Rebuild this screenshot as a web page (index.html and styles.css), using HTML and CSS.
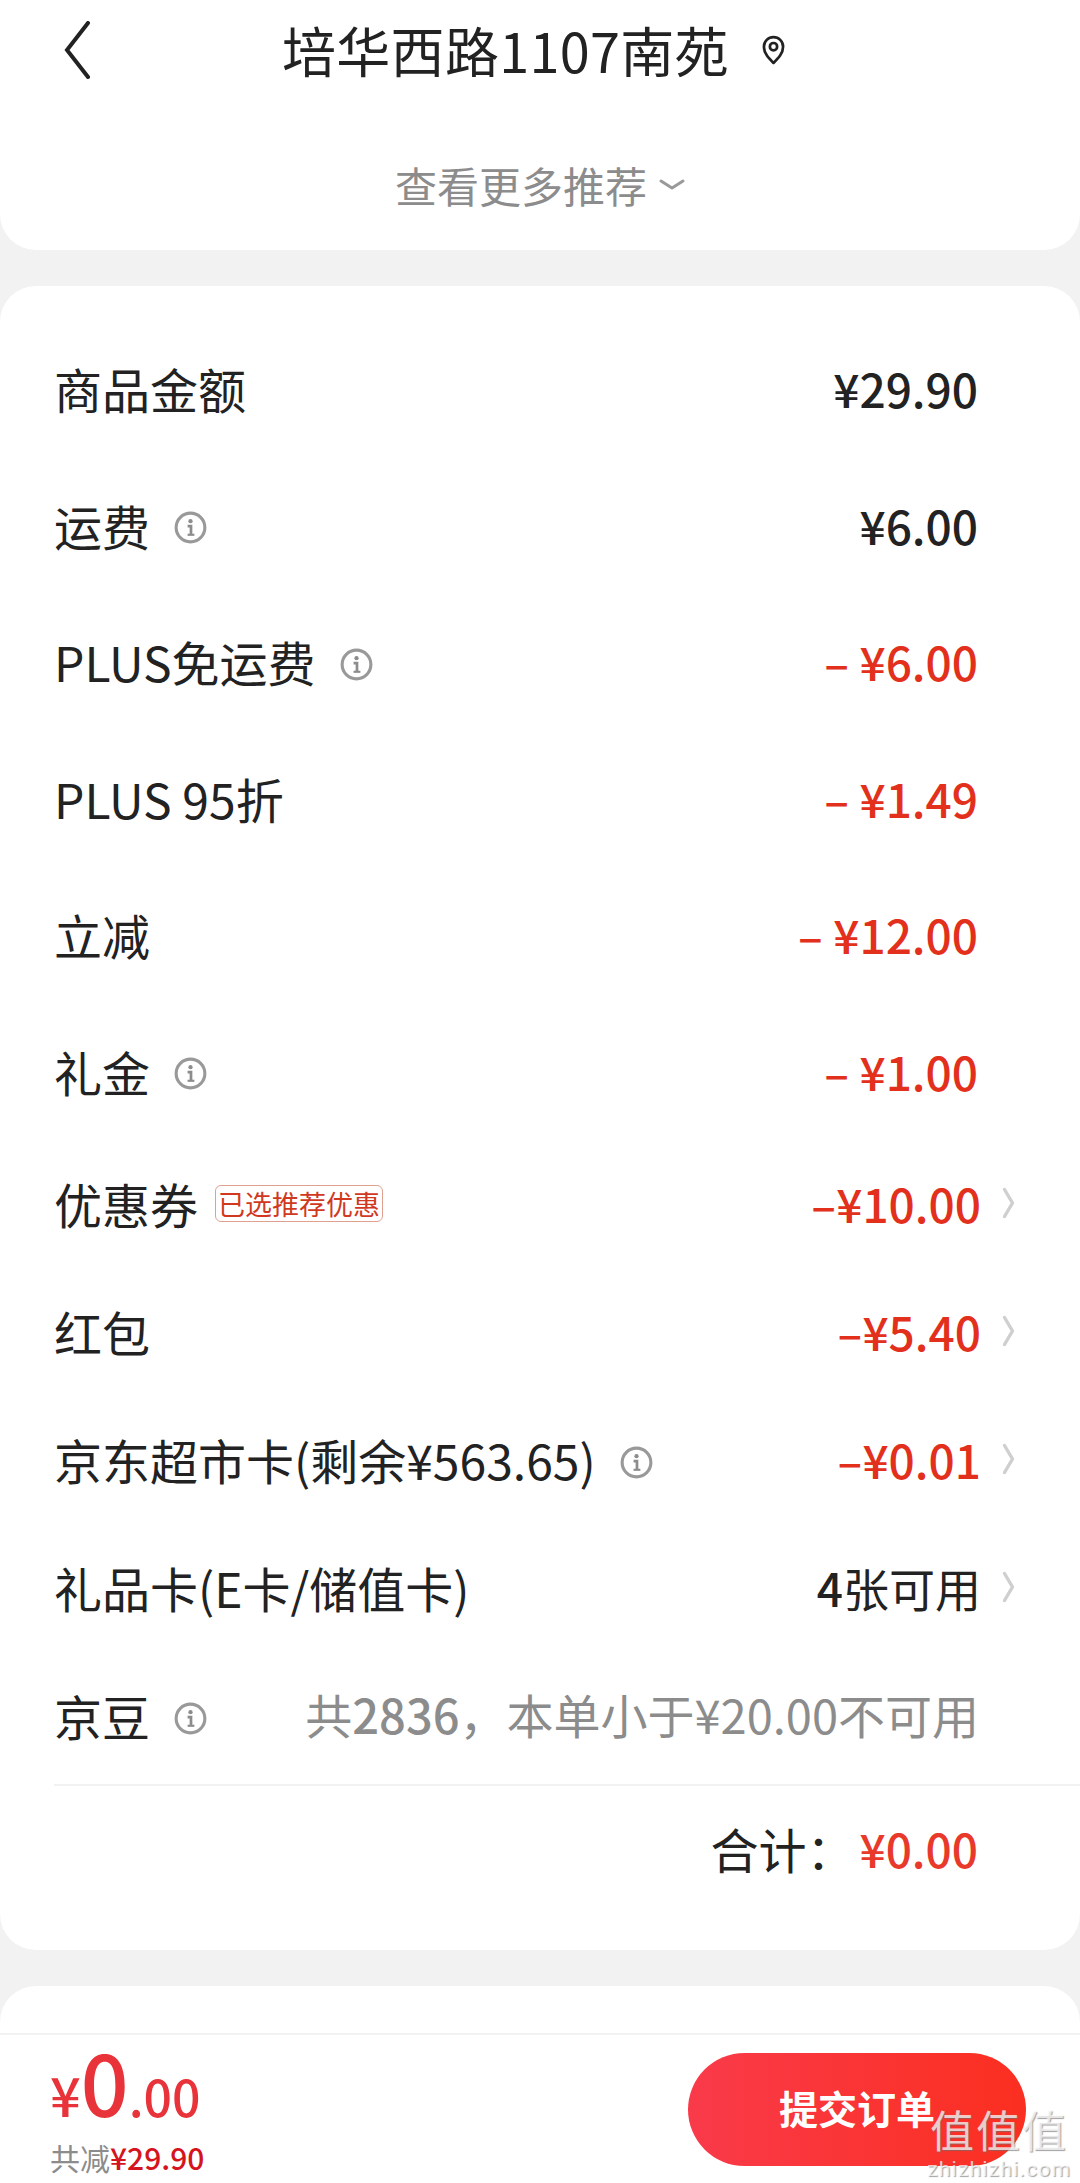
FILE: index.html
```html
<!DOCTYPE html>
<html lang="zh-CN">
<head>
    <meta charset="UTF-8">
    <meta name="viewport" content="width=device-width, initial-scale=1.0">
    <title>提交订单</title>
    <link rel="stylesheet" href="styles.css">
</head>
<body>

<svg class="icon-defs" width="0" height="0">
    <symbol id="info" viewBox="0 0 34 34">
        <circle cx="17" cy="17" r="14.8" fill="none" stroke="#999" stroke-width="3.2"/>
        <circle cx="17" cy="10.5" r="2.2" fill="#8c8c8c"/>
        <path d="M14 15.5h3.5v9" fill="none" stroke="#8c8c8c" stroke-width="2.8"/>
        <path d="M14 24.5h7" fill="none" stroke="#8c8c8c" stroke-width="2.2"/>
    </symbol>
    <symbol id="arrow" viewBox="0 0 14 32">
        <path d="M2.500 2.500l8 13.500-8 13.500" fill="none" stroke="#cfcfcf" stroke-width="3.400" stroke-linecap="round" stroke-linejoin="round"/>
    </symbol>
</svg>

<div class="page">
    <main class="content">
        <!-- Address card -->
        <section class="card top-card">
            <header class="title-bar">
                <svg class="back" viewBox="0 0 26 58"><path d="M24 2L3 29l21 27" fill="none" stroke="#222" stroke-width="4" stroke-linecap="round"/></svg>
                <h1 class="title">培华西路1107南苑</h1>
                <svg class="pin" viewBox="0 0 24 31"><path d="M12 29C7 24 2 19 2 12a10 10 0 0 1 20 0C22 19 17 24 12 29z" fill="none" stroke="#222" stroke-width="2.800" stroke-linejoin="round"/><circle cx="12" cy="12" r="3.800" fill="none" stroke="#222" stroke-width="2.800"/></svg>
            </header>
            <div class="more">
                <span>查看更多推荐</span>
                <svg class="more-arrow" viewBox="0 0 26 11"><path d="M2 2l11 7 11-7" fill="none" stroke="#999" stroke-width="3" stroke-linecap="round" stroke-linejoin="round"/></svg>
            </div>
        </section>

        <!-- Price list -->
        <section class="card price-card">
            <div class="row">
                <div class="label">商品金额</div>
                <div class="value">¥29.90</div>
            </div>
            <div class="row">
                <div class="label">运费<svg class="info"><use href="#info"/></svg></div>
                <div class="value">¥6.00</div>
            </div>
            <div class="row">
                <div class="label">PLUS免运费<svg class="info"><use href="#info"/></svg></div>
                <div class="value red">– ¥6.00</div>
            </div>
            <div class="row">
                <div class="label">PLUS 95折</div>
                <div class="value red">– ¥1.49</div>
            </div>
            <div class="row">
                <div class="label">立减</div>
                <div class="value red">– ¥12.00</div>
            </div>
            <div class="row">
                <div class="label">礼金<svg class="info"><use href="#info"/></svg></div>
                <div class="value red">– ¥1.00</div>
            </div>
            <div class="row short">
                <div class="label">优惠券<span class="tag">已选推荐优惠</span></div>
                <div class="value red">–¥10.00<svg class="go"><use href="#arrow"/></svg></div>
            </div>
            <div class="row short">
                <div class="label">红包</div>
                <div class="value red">–¥5.40<svg class="go"><use href="#arrow"/></svg></div>
            </div>
            <div class="row short">
                <div class="label">京东超市卡(剩余¥563.65)<svg class="info"><use href="#info"/></svg></div>
                <div class="value red">–¥0.01<svg class="go"><use href="#arrow"/></svg></div>
            </div>
            <div class="row short">
                <div class="label">礼品卡(E卡/储值卡)</div>
                <div class="value plain"><b class="digit">4</b>张可用<svg class="go"><use href="#arrow"/></svg></div>
            </div>
            <div class="row short">
                <div class="label">京豆<svg class="info"><use href="#info"/></svg></div>
                <div class="value hint">共<b class="digit">2836</b>，本单小于¥20.00不可用</div>
            </div>
            <div class="total">
                <span>合计：</span><span class="total-num">¥0.00</span>
            </div>
        </section>

        <section class="card next-card"></section>
    </main>

    <!-- Bottom bar -->
    <footer class="bar">
        <div class="pay">
            <div class="pay-num"><span class="yen">¥</span><span class="big">0</span><span class="cents">.00</span></div>
            <div class="saved">共减<span class="saved-num">¥29.90</span></div>
        </div>
        <button class="submit">提交订单</button>
    </footer>

    <div class="watermark">
        <div class="wm-big">值值值</div>
        <div class="wm-small">zhizhizhi.com</div>
    </div>
</div>

</body>
</html>
```

FILE: styles.css
```css
* {
    box-sizing: border-box;
}
body {
    margin: 0;
    font-family: "Noto Sans CJK SC", "Noto Sans", sans-serif;
    background: #f2f2f2;
    color: #222;
}
.icon-defs {
    display: block;
    height: 0;
}
.page {
    position: relative;
    display: flex;
    flex-direction: column;
    height: 2183px;
    overflow: hidden;
}
.content {
    flex: 1;
    min-height: 0;
    overflow: hidden;
}
.card {
    background: #fff;
    border-radius: 36px;
}
.top-card {
    height: 250px;
    border-radius: 0 0 36px 36px;
}
.title-bar {
    display: flex;
    align-items: center;
    height: 100px;
    padding-left: 64px;
}
.back {
    width: 26px;
    height: 58px;
    flex: none;
}
.title {
    margin: 0 0 0 192px;
    font-size: 54px;
    font-weight: 400;
    letter-spacing: 0.3px;
    line-height: 100px;
    white-space: nowrap;
}
.pin {
    width: 23px;
    height: 30px;
    margin-left: 33px;
}
.more {
    display: flex;
    align-items: center;
    justify-content: center;
    height: 88px;
    margin-top: 40px;
    color: #8c8c8c;
    font-size: 42px;
}
.more-arrow {
    width: 26px;
    height: 11px;
    margin-left: 12px;
}
.price-card {
    height: 1664px;
    margin-top: 36px;
    padding-top: 39px;
}
.row {
    display: flex;
    align-items: center;
    justify-content: space-between;
    height: 136.5px;
    padding: 0 102px 10px 54px;
}
.row.short {
    height: 128px;
    padding-right: 64px;
}
.label {
    display: flex;
    align-items: center;
    font-size: 48px;
    white-space: nowrap;
}
.info {
    width: 33px;
    height: 33px;
    margin-top: 6px;
    margin-left: 24px;
}
.value {
    display: flex;
    align-items: center;
    font-size: 46px;
    font-weight: 500;
    white-space: pre;
}
.value.red {
    color: #e2301c;
}
.value.plain {
    font-weight: 400;
}
.value.hint {
    margin-right: 37px;
    margin-bottom: 4px;
    color: #8c8c8c;
    font-size: 47px;
    font-weight: 400;
}
.digit {
    font-weight: 500;
}
.go {
    width: 14px;
    height: 32px;
    margin-left: 21px;
}
.tag {
    margin-left: 17px;
    padding: 0 2px;
    border: 1px solid #e0a090;
    border-radius: 6px;
    color: #d0391f;
    font-size: 27px;
    line-height: 35px;
}
.total {
    display: flex;
    align-items: center;
    justify-content: flex-end;
    height: 130px;
    margin-left: 54px;
    padding-right: 102px;
    padding-bottom: 4px;
    border-top: 2px solid #f2f2f2;
    font-size: 48px;
}
.total-num {
    margin-left: 5px;
    color: #e8392b;
    font-size: 46px;
    font-weight: 500;
}
.next-card {
    height: 100px;
    margin-top: 36px;
}
.bar {
    display: flex;
    align-items: center;
    justify-content: space-between;
    height: 150px;
    padding: 0 54px 0 50px;
    background: #fff;
    border-top: 2px solid #f2f2f2;
}
.pay-num {
    display: flex;
    align-items: baseline;
    color: #e8333a;
    font-weight: 500;
    line-height: 82px;
}
.yen {
    font-size: 54px;
}
.big {
    font-size: 84px;
}
.cents {
    font-size: 50px;
}
.saved {
    color: #8c8c8c;
    font-size: 30px;
    line-height: 42px;
}
.saved-num {
    color: #d5141e;
    font-weight: 500;
}
.submit {
    width: 338px;
    height: 113px;
    padding: 0 0 4px 0;
    border: none;
    border-radius: 57px;
    background: linear-gradient(90deg, #f93a4a, #fb2f20);
    color: #fff;
    font-family: inherit;
    font-size: 39px;
    font-weight: 700;
}
.watermark {
    position: absolute;
    right: 9px;
    bottom: 2px;
    text-align: center;
    color: rgba(255, 255, 255, 0.72);
    text-shadow: 1px 1px 1px rgba(110, 110, 110, 0.65);
}
.wm-big {
    font-size: 44px;
    letter-spacing: 2px;
    line-height: 52px;
}
.wm-small {
    margin-top: 2px;
    font-family: Roboto, sans-serif;
    font-size: 21px;
    letter-spacing: 1.2px;
    line-height: 24px;
}
```
